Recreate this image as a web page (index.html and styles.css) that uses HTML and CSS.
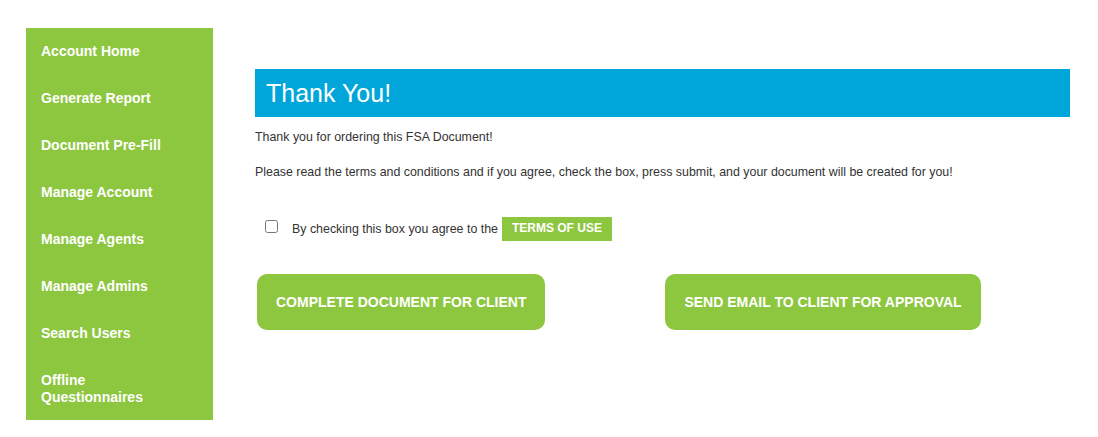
FILE: index.html
```html
<!DOCTYPE html>
<html lang="en">
<head>
    <meta charset="UTF-8">
    <title>Thank You</title>
    <link rel="stylesheet" href="styles.css">
</head>
<body>
    <div id="page">
        <!-- Menu lateral -->
        <div id="sidebar">
            <a href="#">Account Home</a>
            <a href="#">Generate Report</a>
            <a href="#">Document Pre-Fill</a>
            <a href="#">Manage Account</a>
            <a href="#">Manage Agents</a>
            <a href="#">Manage Admins</a>
            <a href="#">Search Users</a>
            <a href="#">Offline Questionnaires</a>
        </div>

        <!-- Contenido -->
        <div id="content">
            <h1 class="title-bar">Thank You!</h1>
            <p>Thank you for ordering this FSA Document!</p>
            <p>Please read the terms and conditions and if you agree, check the box, press submit, and your document will be created for you!</p>

            <div class="agree-row">
                <input type="checkbox" id="agree">
                <label for="agree">By checking this box you agree to the</label>
                <a href="#" class="terms">TERMS OF USE</a>
            </div>

            <div class="actions">
                <button class="big-button">COMPLETE DOCUMENT FOR CLIENT</button>
                <button class="big-button">SEND EMAIL TO CLIENT FOR APPROVAL</button>
            </div>
        </div>
    </div>
</body>
</html>
```
FILE: styles.css
```css
body, html {
    margin: 0;
    padding: 0;
    font-family: "Liberation Sans", Arial, sans-serif;
    background-color: #fff;
    color: #333;
}

#page {
    display: flex;
    padding: 28px 0 0 26px;
}

#sidebar {
    width: 187px;
    height: 392px;
    background-color: #8dc63f;
    display: flex;
    flex-direction: column;
    padding-top: 15px;
    box-sizing: border-box;
}

#sidebar a {
    color: #fff;
    font-size: 14px;
    font-weight: bold;
    text-decoration: none;
    padding: 0 30px 0 15px;
    line-height: 17px;
    margin-bottom: 30px;
}

#content {
    flex-grow: 1;
    padding: 41px 28px 0 42px;
}

.title-bar {
    margin: 0;
    height: 48px;
    background-color: #00a6da;
    color: #fff;
    font-size: 25px;
    font-weight: normal;
    line-height: 48px;
    padding-left: 11px;
}

#content p {
    font-size: 12.4px;
    margin: 13px 0 0 0;
    line-height: 14px;
}

#content p + p {
    margin-top: 21px;
}

.agree-row {
    display: flex;
    align-items: center;
    margin-top: 38px;
    font-size: 12.4px;
}

.agree-row input {
    margin: 0 14px 0 10px;
    width: 13px;
    height: 13px;
    position: relative;
    top: -3px;
}

.terms {
    background-color: #8dc63f;
    color: #fff;
    font-weight: bold;
    text-decoration: none;
    padding: 4px 10px 5px;
    margin-left: 4px;
    line-height: 15px;
    font-size: 12px;
}

.actions {
    display: flex;
    gap: 120px;
    margin-top: 33px;
    padding-left: 2px;
}

.big-button {
    background-color: #8dc63f;
    color: #fff;
    border: none;
    border-radius: 10px;
    height: 56px;
    padding: 0 19px;
    font-family: "Liberation Sans", Arial, sans-serif;
    font-size: 14px;
    font-weight: bold;
    cursor: pointer;
}
```
